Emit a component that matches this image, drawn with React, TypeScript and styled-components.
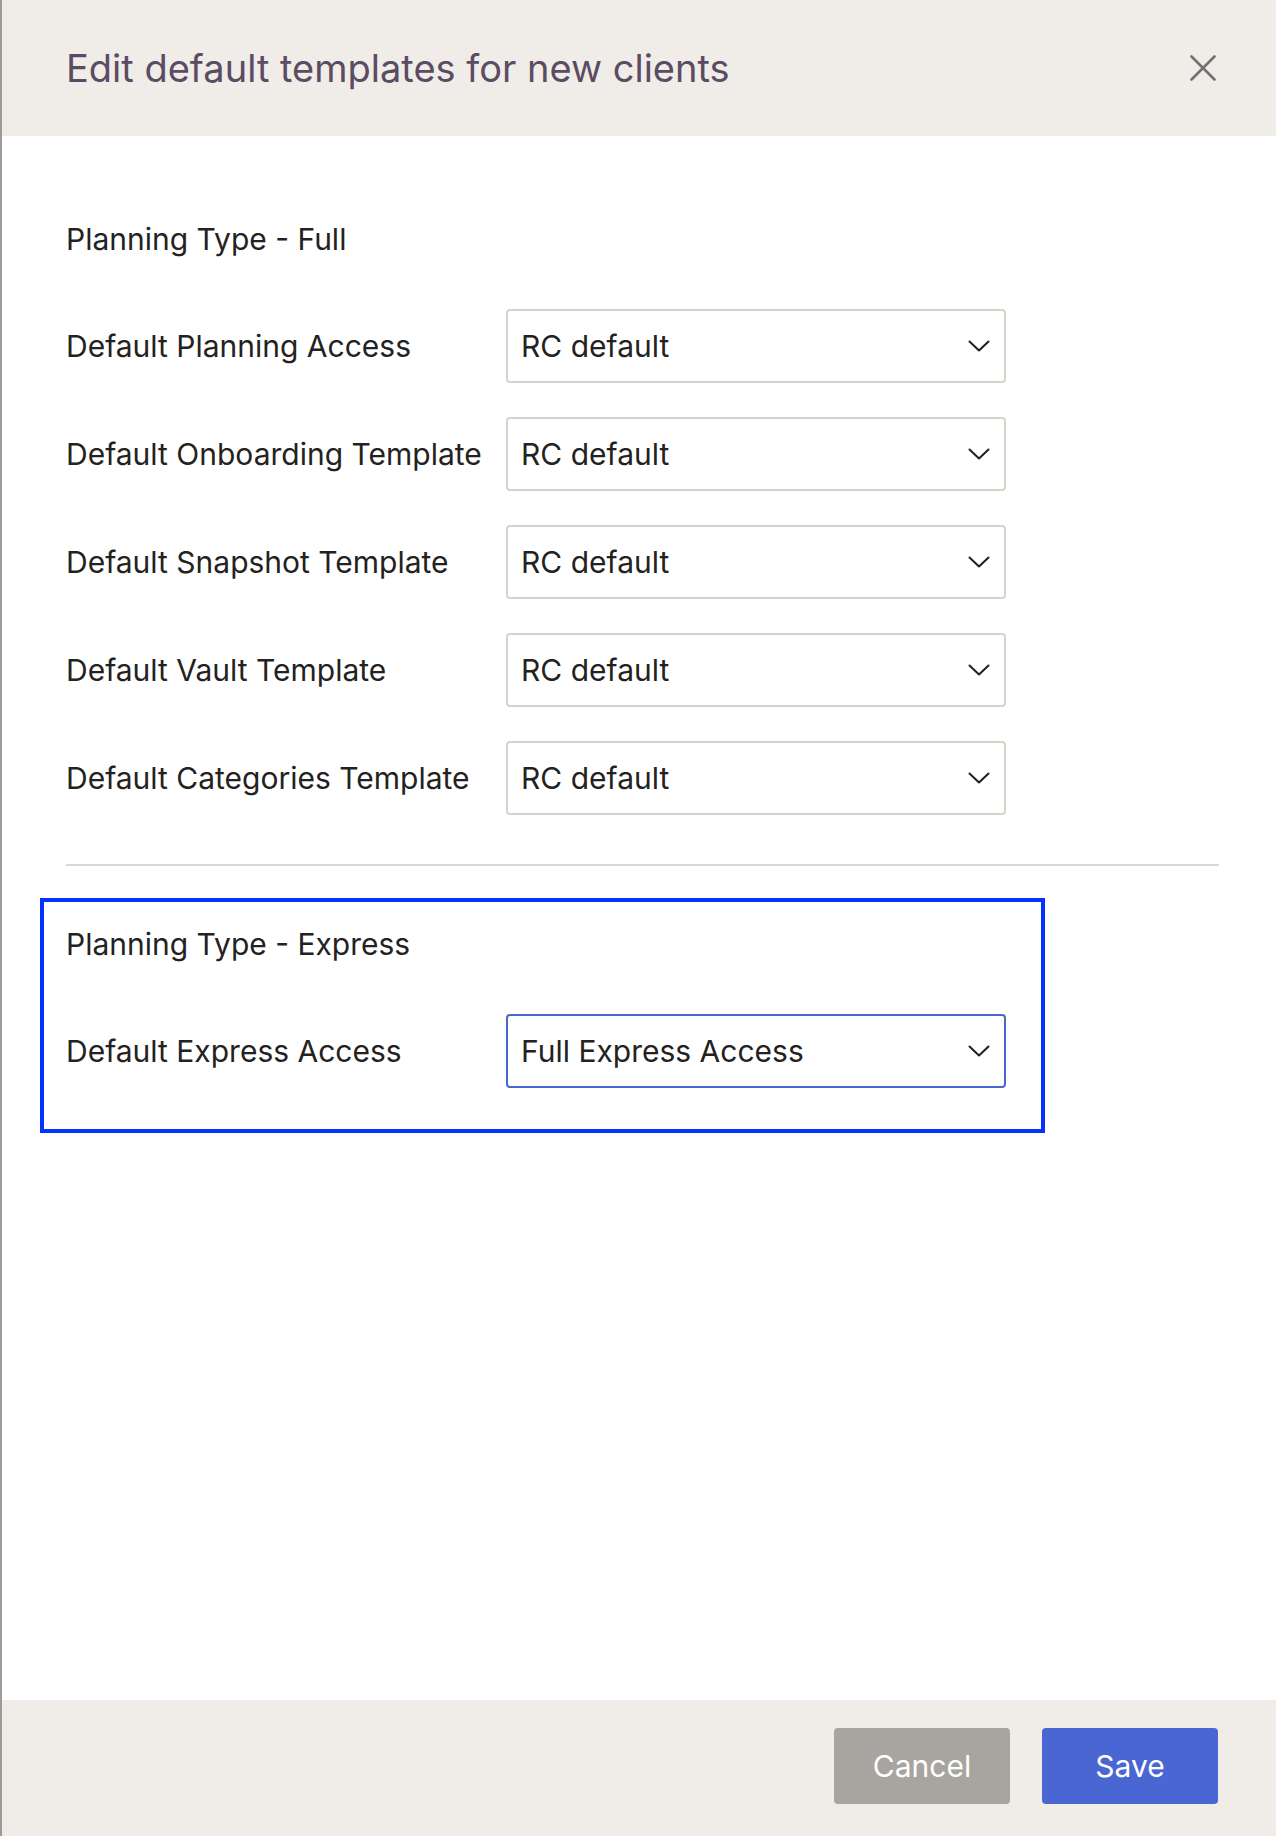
import React from "react";
import styled, { createGlobalStyle } from "styled-components";

const GlobalStyle = createGlobalStyle`
  html, body {
    margin: 0;
    padding: 0;
  }
  body {
    background-color: #9b9b9b;
    font-family: Inter, "Noto Sans", "Liberation Sans", sans-serif;
    -webkit-font-smoothing: antialiased;
  }
  * {
    box-sizing: border-box;
  }
`;

const Modal = styled.div`
  margin-left: 2px;
  height: 1836px;
  display: flex;
  flex-direction: column;
  background-color: #fff;
  overflow: hidden;
`;

const Header = styled.header`
  height: 136px;
  flex-shrink: 0;
  display: flex;
  align-items: center;
  justify-content: space-between;
  padding: 0 60px 0 64px;
  background-color: #f0ede8;
`;

const Title = styled.h1`
  margin: 0;
  font-size: 38px;
  font-weight: 400;
  color: #5b4b63;
`;

const CloseButton = styled.button`
  width: 26px;
  height: 26px;
  padding: 0;
  border: none;
  background: none;
  display: flex;
  align-items: center;
  justify-content: center;
  cursor: pointer;
`;

const Body = styled.main`
  flex: 1;
  padding: 85px 57px 0 64px;
`;

const SectionTitle = styled.h2`
  margin: 0 0 52px;
  font-size: 30px;
  line-height: 36px;
  font-weight: 400;
  color: #242220;
`;

const Rows = styled.div`
  display: flex;
  flex-direction: column;
  gap: 34px;
`;

const Row = styled.div`
  display: grid;
  grid-template-columns: 440px 500px;
  align-items: center;
`;

const Label = styled.label`
  font-size: 30px;
  line-height: 36px;
  color: #242220;
  white-space: nowrap;
`;

const Select = styled.div<{ $active?: boolean }>`
  height: 74px;
  display: flex;
  align-items: center;
  justify-content: space-between;
  padding: 0 14px 0 13px;
  border: 2px solid ${(p) => (p.$active ? "#4a66d1" : "#d7d3ca")};
  border-radius: 4px;
  background-color: #fff;
  font-size: 30px;
  color: #242220;
  cursor: pointer;
`;

const Divider = styled.hr`
  margin: 49px 0 32px;
  border: none;
  height: 2px;
  background-color: #dcd8cf;
`;

const Highlight = styled.section`
  margin-left: -26px;
  width: fit-content;
  border: 4px solid #0433ff;
  padding: 24px 35px 41px 22px;
`;

const Footer = styled.footer`
  flex-shrink: 0;
  display: flex;
  justify-content: flex-end;
  gap: 32px;
  padding: 28px 58px 32px;
  background-color: #f0ede8;
`;

const Button = styled.button<{ $primary?: boolean }>`
  width: 176px;
  height: 76px;
  border: none;
  border-radius: 4px;
  background-color: ${(p) => (p.$primary ? "#4a66d2" : "#a8a49f")};
  color: #fff;
  font-family: inherit;
  font-size: 30px;
  cursor: pointer;
`;

const Chevron = () => (
  <svg width="22" height="12" viewBox="0 0 22 12" fill="none">
    <polyline points="1.5,1.5 11,10.5 20.5,1.5" stroke="#1f1f1f" strokeWidth="2" strokeLinecap="round" strokeLinejoin="round" />
  </svg>
);

const CloseIcon = () => (
  <svg width="26" height="26" viewBox="0 0 26 26" fill="none">
    <path d="M1.5 1.5 L24.5 24.5 M24.5 1.5 L1.5 24.5" stroke="#707070" strokeWidth="2.6" strokeLinecap="round" />
  </svg>
);

const fullRows = [
  "Default Planning Access",
  "Default Onboarding Template",
  "Default Snapshot Template",
  "Default Vault Template",
  "Default Categories Template",
];

const App = () => {
  return (
    <>
      <GlobalStyle />
      <Modal>
        <Header>
          <Title>Edit default templates for new clients</Title>
          <CloseButton aria-label="Close">
            <CloseIcon />
          </CloseButton>
        </Header>
        <Body>
          <SectionTitle>Planning Type - Full</SectionTitle>
          <Rows>
            {fullRows.map((label) => (
              <Row key={label}>
                <Label>{label}</Label>
                <Select>
                  <span>RC default</span>
                  <Chevron />
                </Select>
              </Row>
            ))}
          </Rows>
          <Divider />
          <Highlight>
            <SectionTitle>Planning Type - Express</SectionTitle>
            <Row>
              <Label>Default Express Access</Label>
              <Select $active>
                <span>Full Express Access</span>
                <Chevron />
              </Select>
            </Row>
          </Highlight>
        </Body>
        <Footer>
          <Button>Cancel</Button>
          <Button $primary>Save</Button>
        </Footer>
      </Modal>
    </>
  );
};

export default App;
